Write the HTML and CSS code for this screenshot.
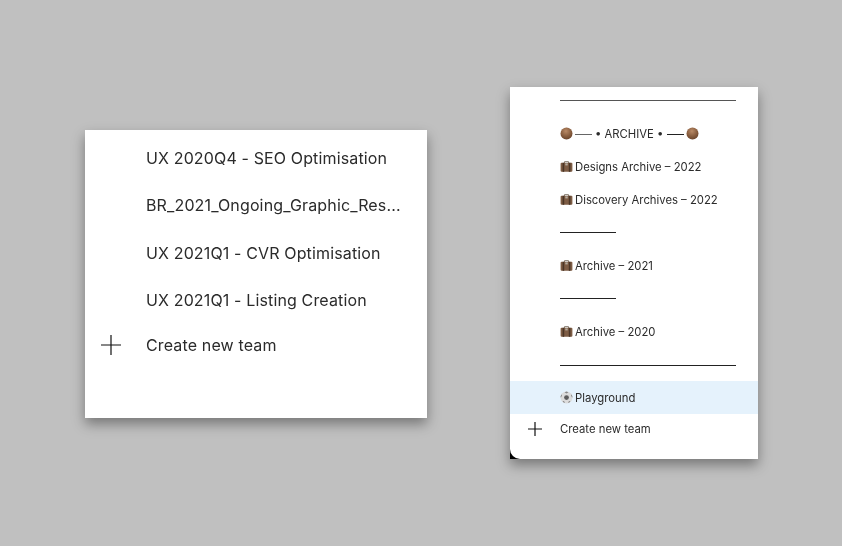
FILE: index.html
```html
<!DOCTYPE html>
<html lang="en">
<head>
  <meta charset="UTF-8">
  <title>Team menus</title>
  <link rel="stylesheet" href="styles.css">
</head>
<body>
  <svg class="defs" width="0" height="0" aria-hidden="true">
    <defs>
      <radialGradient id="bead" cx="45%" cy="30%" r="75%">
        <stop offset="0" stop-color="#b98a66"/>
        <stop offset="0.55" stop-color="#8a5f40"/>
        <stop offset="1" stop-color="#654028"/>
      </radialGradient>
      <symbol id="icon-bead" viewBox="0 0 13 13">
        <circle cx="6.5" cy="6.5" r="6" fill="url(#bead)"/>
      </symbol>
      <symbol id="icon-case" viewBox="0 0 13 13">
        <path d="M4.5 3V1.6h4V3" fill="none" stroke="#8b8176" stroke-width="1"/>
        <rect x="0.6" y="2.8" width="11.8" height="9" rx="1" fill="#7d5c44"/>
        <rect x="2.6" y="2.8" width="1.6" height="9" fill="#4a3526"/>
        <rect x="8.8" y="2.8" width="1.6" height="9" fill="#4a3526"/>
        <rect x="5.3" y="3.4" width="2.4" height="2" fill="#b5ac9f"/>
      </symbol>
      <symbol id="icon-ball" viewBox="0 0 13 13">
        <circle cx="6.5" cy="6.5" r="6" fill="#dcdcdc"/>
        <circle cx="6.5" cy="6.6" r="2.4" fill="#5c5c5c"/>
        <path d="M4.6 1.2 6.5 2.4 8.4 1.2 6.5 .5zM.9 6.8 2 4.6 1.6 3.2.5 5.6zM12.1 6.8 11 4.6 11.4 3.2 12.5 5.6zM3.6 11.6 5 11.9 4 10 2.6 10.2zM9.4 11.6 8 11.9 9 10 10.4 10.2z" fill="#888"/>
      </symbol>
    </defs>
  </svg>

  <div class="team-menu">
    <div class="team-row">UX 2020Q4 - SEO Optimisation</div>
    <div class="team-row">BR_2021_Ongoing_Graphic_Res...</div>
    <div class="team-row">UX 2021Q1 - CVR Optimisation</div>
    <div class="team-row">UX 2021Q1 - Listing Creation</div>
    <div class="team-row team-create">
      <svg class="plus plus-large" viewBox="0 0 20 20"><path d="M10 0v20M0 10h20"/></svg>
      Create new team
    </div>
  </div>

  <div class="side-menu">
    <div class="side-list">
      <div class="side-row side-first"><div class="rule rule-soft"></div></div>
      <div class="side-row">
        <svg class="emoji"><use href="#icon-bead"/></svg>
        <span class="archive-title"><span class="dash"></span>• ARCHIVE • <span class="dash dash-end"></span></span>
        <svg class="emoji"><use href="#icon-bead"/></svg>
      </div>
      <div class="side-row"><svg class="emoji"><use href="#icon-case"/></svg>Designs Archive – 2022</div>
      <div class="side-row"><svg class="emoji"><use href="#icon-case"/></svg>Discovery Archives – 2022</div>
      <div class="side-row"><div class="rule rule-short"></div></div>
      <div class="side-row"><svg class="emoji"><use href="#icon-case"/></svg>Archive – 2021</div>
      <div class="side-row"><div class="rule rule-short"></div></div>
      <div class="side-row"><svg class="emoji"><use href="#icon-case"/></svg>Archive – 2020</div>
      <div class="side-row side-rule-last"><div class="rule"></div></div>
      <div class="side-row side-active"><svg class="emoji"><use href="#icon-ball"/></svg>Playground</div>
      <div class="side-row side-create">
        <svg class="plus" viewBox="0 0 14 14"><path d="M7 0v14M0 7h14"/></svg>
        Create new team
      </div>
    </div>
  </div>
</body>
</html>
```

FILE: styles.css
```css
* {
  margin: 0;
  padding: 0;
  box-sizing: border-box;
}

html, body {
  height: 100%;
  overflow: hidden;
}

body {
  background-color: #c0c0c0;
  display: flex;
  align-items: flex-start;
  gap: 83px;
  padding-left: 85px;
  font-family: Inter, "Liberation Sans", sans-serif;
  color: #2b2b2b;
}

.defs {
  position: absolute;
}

.team-menu {
  width: 342px;
  margin-top: 130px;
  padding: 4px 0 52px;
  background-color: #fff;
  box-shadow: 0 6px 12px rgba(0, 0, 0, 0.38);
  font-size: 16px;
  letter-spacing: 0.14px;
}

.team-row {
  display: flex;
  align-items: center;
  height: 47.5px;
  padding-left: 61px;
  filter: blur(0.45px);
}

.team-create {
  position: relative;
  height: 42px;
}

.plus {
  position: absolute;
  left: 18px;
  top: 50%;
  width: 14px;
  height: 14px;
  margin-top: -7px;
  fill: none;
  stroke: #111;
  stroke-width: 1.2;
}

.plus-large {
  left: 16px;
  width: 20px;
  height: 20px;
  margin-top: -10px;
}

.side-menu {
  width: 248px;
  margin-top: 87px;
  background-color: #000;
  box-shadow: 0 6px 12px rgba(0, 0, 0, 0.38);
}

.side-list {
  padding-bottom: 15px;
  background-color: #fff;
  border-bottom-left-radius: 10px;
  font-size: 11.3px;
}

.side-row {
  position: relative;
  display: flex;
  align-items: center;
  height: 33px;
  padding-left: 50px;
  filter: blur(0.35px);
}

.side-first {
  height: 30px;
  padding-top: 13px;
  align-items: flex-start;
}

.side-rule-last {
  padding-top: 2px;
}

.side-active {
  background-color: #e5f2fc;
}

.side-create {
  height: 30px;
}

.rule {
  width: 176px;
  height: 1px;
  background-color: #222;
}

.rule-soft {
  background-color: #555;
}

.rule-short {
  width: 56px;
}

.emoji {
  flex: none;
  width: 13px;
  height: 13px;
  margin-right: 2px;
}

.archive-title {
  margin-right: 2px;
  white-space: pre;
}

.dash {
  display: inline-block;
  width: 17px;
  height: 1px;
  margin-right: 3px;
  vertical-align: 3px;
  background-color: #666;
}

.dash-end {
  margin-right: 0;
  background-color: #222;
}
```
